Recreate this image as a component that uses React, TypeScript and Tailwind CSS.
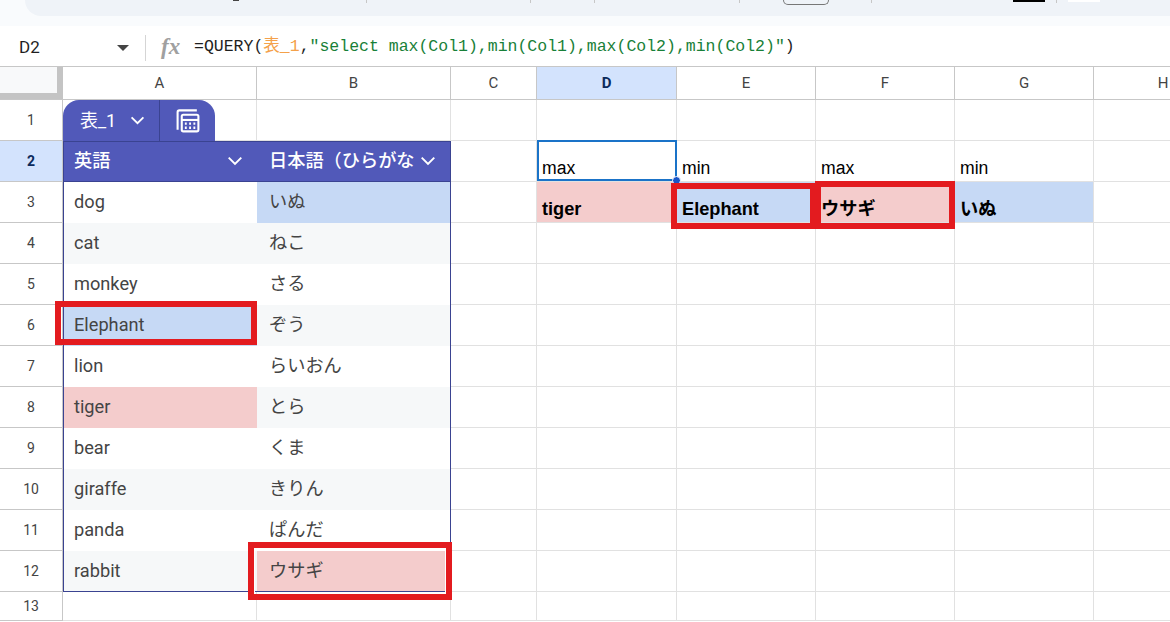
const colClass = [
  'w-[194px]', 'w-[194px]', 'w-[86px]', 'w-[140px]', 'w-[139px]', 'w-[139px]', 'w-[139px]', 'w-[139px]',
];
const colNames = ['A', 'B', 'C', 'D', 'E', 'F', 'G', 'H'];

const animals: [string, string][] = [
  ['dog', 'いぬ'],
  ['cat', 'ねこ'],
  ['monkey', 'さる'],
  ['Elephant', 'ぞう'],
  ['lion', 'らいおん'],
  ['tiger', 'とら'],
  ['bear', 'くま'],
  ['giraffe', 'きりん'],
  ['panda', 'ぱんだ'],
  ['rabbit', 'ウサギ'],
];

const jp = "font-['Roboto','Noto_Sans_CJK_JP',sans-serif]";
const arial = "font-['Liberation_Sans','Noto_Sans_CJK_JP',sans-serif]";

function Chevron({ className }: { className: string }) {
  return (
    <svg className={className} viewBox="0 0 14 14" fill="none" stroke="currentColor" strokeWidth="1.7">
      <path d="M1.5 4 7 9.5 12.5 4" />
    </svg>
  );
}

function CalcIcon() {
  return (
    <svg className="h-[26px] w-[26px] text-white" viewBox="0 0 25 25" fill="none" stroke="currentColor" strokeWidth="2">
      <path d="M2.5 21V4C2.5 2.8 3 2.3 4.2 2.3H21" />
      <rect x="6.5" y="6.5" width="16" height="16" rx="1.5" />
      <path d="M6.5 11.5H22.5" />
      <path d="M9.5 15h1.8M13.6 15h1.8M17.7 15h1.8M9.5 19h1.8M13.6 19h1.8M17.7 19h1.8" strokeWidth="2.2" />
    </svg>
  );
}

function RedBox({ className, inner }: { className: string; inner?: boolean }) {
  return (
    <div className={`absolute z-20 border-[6px] border-[#e31b1f] ${className}`}>
      {inner && <div className="h-full w-full border-x border-t border-white" />}
    </div>
  );
}

function Toolbar() {
  return (
    <div className="h-[26px] bg-[#f9fbfd]">
      <div className="ml-[25px] flex h-[16px] items-start rounded-bl-[16px] bg-[#eff3f8]">
        <div className="ml-[208px] h-[1px] w-[6px] bg-[#444]" />
        <div className="ml-[127px] h-[3px] w-px bg-[#c7c7c7]" />
        <div className="ml-[163px] h-[3px] w-px bg-[#c7c7c7]" />
        <div className="ml-[63px] h-[3px] w-px bg-[#c7c7c7]" />
        <div className="ml-[144px] h-[3px] w-px bg-[#c7c7c7]" />
        <div className="ml-[43px] h-[5px] w-[46px] rounded-b-[5px] border border-t-0 border-[#777]" />
        <div className="ml-[42px] h-[3px] w-px bg-[#c7c7c7]" />
        <div className="ml-[141px] h-[2px] w-[32px] bg-black" />
        <div className="ml-[11px] h-[3px] w-px bg-[#c7c7c7]" />
        <div className="ml-[11px] h-[2px] w-[32px] bg-white" />
      </div>
    </div>
  );
}

function FormulaBar() {
  return (
    <div className="flex h-[41px] items-center border-b border-[#c7c7c7] bg-white pt-[3px]">
      <div className="w-[117px] pl-[19px] font-['Roboto',sans-serif] text-[17px] text-[#1f1f1f]">D2</div>
      <div className="h-0 w-0 border-x-[6px] border-t-[6px] border-x-transparent border-t-[#444]" />
      <div className="ml-[16px] h-[26px] w-px bg-[#d5d5d5]" />
      <div className="ml-[15px] w-[33px] font-['Liberation_Serif',serif] text-[23px] font-bold italic text-[#a0a0a0]">fx</div>
      <div className="whitespace-pre font-['Liberation_Mono','Noto_Sans_CJK_JP',monospace] text-[16.5px] text-[#1f1f1f]">
        =QUERY(<span className="text-[#f4a14a]">表_1</span>,
        <span className="text-[#188038]">{'"select max(Col1),min(Col1),max(Col2),min(Col2)"'}</span>)
      </div>
    </div>
  );
}

function HeaderRow() {
  return (
    <div className="flex h-[33px] border-b border-[#c7c7c7]">
      <div className="h-full w-[63px] shrink-0 border-r-[6px] border-b-[6px] border-[#c4c4c4] bg-[#f8f9fa]" />
      {colNames.map((name, i) => (
        <div
          key={name}
          className={`flex h-full shrink-0 items-center justify-center border-r border-[#c7c7c7] font-['Roboto',sans-serif] text-[15px] ${colClass[i]} ${
            name === 'D' ? 'bg-[#d3e3fd] font-bold text-[#0b2a5b]' : 'text-[#444]'
          }`}
        >
          {name}
        </div>
      ))}
    </div>
  );
}

function RowLabel({ n }: { n: number }) {
  return (
    <div
      className={`flex h-full w-[63px] shrink-0 items-center justify-center border-r border-b border-[#c7c7c7] font-['Roboto',sans-serif] text-[14px] ${
        n === 2 ? 'bg-[#d3e3fd] font-bold text-[#0b2a5b]' : 'text-[#444]'
      }`}
    >
      {n}
    </div>
  );
}

function Blank({ i, className = '' }: { i: number; className?: string }) {
  return <div className={`h-full shrink-0 border-r border-b border-[#e1e1e1] ${colClass[i]} ${className}`} />;
}

function TableCell({ text, bg, i, last }: { text: string; bg: string; i: number; last: boolean }) {
  return (
    <div
      className={`flex h-full shrink-0 items-center text-[18.2px] text-[#444] ${jp} ${colClass[i]} ${bg} ${
        i === 0 ? 'border-l border-[#3a4391] pl-[10px]' : 'border-r border-[#3a4391] pl-[12px]'
      } ${last ? 'border-b border-b-[#3a4391]' : 'pb-px'}`}
    >
      {text}
    </div>
  );
}

function ResultCell({ text, i, bold, bg }: { text: string; i: number; bold?: boolean; bg?: string }) {
  return (
    <div
      className={`flex h-full shrink-0 items-end border-r border-b border-[#e1e1e1] pl-[5px] text-black ${arial} ${colClass[i]} ${bg ?? ''} ${
        bold ? 'text-[18.2px] leading-[25px] font-bold' : 'text-[17.6px]'
      }`}
    >
      {text}
    </div>
  );
}

export default function App() {
  return (
    <div className="h-[622px] w-[1170px] overflow-hidden bg-white">
      <Toolbar />
      <FormulaBar />
      <HeaderRow />

      <div className="relative">
        {/* row 1: table tab */}
        <div className="flex h-[41px]">
          <RowLabel n={1} />
          <div className="relative h-full w-[194px] shrink-0 border-r border-b border-[#e1e1e1]">
            <div className={`absolute bottom-[-1px] left-0 z-10 flex h-[41px] w-[152px] rounded-t-[16px] bg-[#5159b9] text-white ${jp}`}>
              <div className="flex w-[97px] items-center border-r border-[#3a4391] pl-[17px] text-[18px]">
                表_1
                <Chevron className="ml-[14px] h-[15px] w-[15px]" />
              </div>
              <div className="flex flex-1 items-center justify-center">
                <CalcIcon />
              </div>
            </div>
          </div>
          {[1, 2, 3, 4, 5, 6, 7].map((i) => (
            <Blank key={i} i={i} />
          ))}
        </div>

        {/* row 2: headers and query labels */}
        <div className="flex h-[41px]">
          <RowLabel n={2} />
          <div className={`flex h-full w-[194px] shrink-0 items-center justify-between border-y border-l border-[#3a4391] bg-[#5159b9] pb-[2px] pl-[10px] pr-[14px] text-[18.2px] font-medium text-white ${jp}`}>
            英語
            <Chevron className="h-[16px] w-[16px]" />
          </div>
          <div className={`flex h-full w-[194px] shrink-0 items-center justify-between border-y border-r border-[#3a4391] bg-[#5159b9] pb-[2px] pl-[12px] pr-[14px] text-[18.2px] font-medium text-white ${jp}`}>
            <span className="whitespace-nowrap">日本語（ひらがな</span>
            <Chevron className="h-[16px] w-[16px] shrink-0" />
          </div>
          <Blank i={2} />
          <div className={`relative flex h-full w-[140px] shrink-0 items-end border-b border-[#e1e1e1] pl-[5px] text-[17.6px] text-black ${arial}`}>
            max
            <div className="absolute inset-0 -top-px border-2 border-[#1a73c8]" />
            <div className="absolute bottom-[-4px] right-[-4px] z-10 h-[9px] w-[9px] rounded-full border border-white bg-[#1a56c8]" />
          </div>
          <ResultCell text="min" i={4} />
          <ResultCell text="max" i={5} />
          <ResultCell text="min" i={6} />
          <Blank i={7} />
        </div>

        {/* rows 3-12: table body */}
        {animals.map(([en, ja], idx) => {
          const n = idx + 3;
          const stripe = idx % 2 === 1 ? 'bg-[#f6f8f9]' : 'bg-white';
          const enBg = en === 'Elephant' ? 'bg-[#c6d9f5]' : en === 'tiger' ? 'bg-[#f4cccc]' : stripe;
          const jaBg = ja === 'いぬ' ? 'bg-[#c6d9f5]' : ja === 'ウサギ' ? 'bg-[#f4cccc]' : stripe;
          return (
            <div key={en} className="flex h-[41px]">
              <RowLabel n={n} />
              <TableCell text={en} bg={enBg} i={0} last={n === 12} />
              <TableCell text={ja} bg={jaBg} i={1} last={n === 12} />
              <Blank i={2} />
              {n === 3 ? (
                <>
                  <ResultCell text="tiger" i={3} bold bg="bg-[#f4cccc]" />
                  <ResultCell text="Elephant" i={4} bold bg="bg-[#c6d9f5]" />
                  <ResultCell text="ウサギ" i={5} bold bg="bg-[#f4cccc]" />
                  <ResultCell text="いぬ" i={6} bold bg="bg-[#c6d9f5]" />
                </>
              ) : (
                [3, 4, 5, 6].map((i) => <Blank key={i} i={i} />)
              )}
              <Blank i={7} />
            </div>
          );
        })}

        {/* row 13 */}
        <div className="flex h-[29px]">
          <RowLabel n={13} />
          {[0, 1, 2, 3, 4, 5, 6, 7].map((i) => (
            <Blank key={i} i={i} />
          ))}
        </div>

        {/* annotation boxes */}
        <RedBox className="left-[671px] top-[83px] h-[46px] w-[145px]" />
        <RedBox className="left-[815px] top-[81px] h-[48px] w-[140px]" />
        <RedBox className="left-[55px] top-[201px] h-[44px] w-[202px]" />
        <RedBox className="left-[248px] top-[442px] h-[58px] w-[204px]" inner />
      </div>
    </div>
  );
}
